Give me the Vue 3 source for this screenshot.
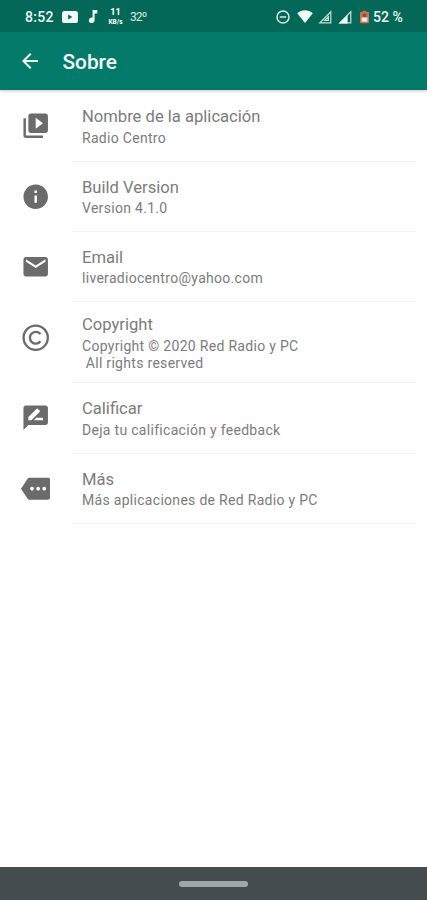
<template>
  <div class="screen">
    <header class="top">
      <div class="status">
        <div class="status-left">
          <span class="clock">8:52</span>
          <svg class="youtube" viewBox="0 0 16 12">
            <rect width="16" height="12" rx="2.6" />
            <path d="M6.2 3.4v5.2L10.4 6z" class="cutout" />
          </svg>
          <svg class="note" viewBox="6 3 12 18">
            <path d="M11.4 3v10.55A4 4 0 1 0 14.2 17V8H18V3z" />
          </svg>
          <span class="speed"><b>11</b><small>KB/s</small></span>
          <span class="temp">32º</span>
        </div>
        <div class="status-right">
          <svg class="dnd" viewBox="0 0 14 14">
            <circle cx="7" cy="7" r="6" />
            <path d="M3.8 7h6.4" />
          </svg>
          <svg class="wifi" viewBox="0 0 16 13">
            <path d="M8 13 0.2 3.3C4.5-.8 11.5-.8 15.8 3.3z" />
          </svg>
          <svg class="signal" viewBox="0 0 14 14">
            <path d="M1.8 12.8H12.8V1.8z" class="outline" />
            <path d="M6.6 10.4h3.8V6.6z" class="outline" />
          </svg>
          <svg class="signal second" viewBox="0 0 14 14">
            <path d="M1.8 12.8H12.8V1.8z" class="outline" />
            <path d="M1 13.4H9.6V5z" />
          </svg>
          <svg class="battery" viewBox="0 0 10 14">
            <path d="M3 0h4v1.5h2.2q.8 0 .8.8v10.9q0 .8-.8.8H.8q-.8 0-.8-.8V2.3q0-.8.8-.8H3z" />
            <path d="M1.8 7.6h6.4v4.6H1.8z" class="charge" />
            <path d="M3 3.4h4v3.4H3z" class="hollow" />
          </svg>
          <span class="percent">52 %</span>
        </div>
      </div>
      <div class="toolbar">
        <svg class="back" viewBox="0 0 24 24">
          <path d="M20 11H7.83l5.59-5.59L12 4l-8 8 8 8 1.41-1.41L7.83 13H20z" />
        </svg>
        <h1>Sobre</h1>
      </div>
    </header>

    <main class="list">
      <div v-for="item in items" :key="item.title" class="item" :class="{ tall: item.tall }">
        <svg class="icon" viewBox="0 0 24 24">
          <path v-if="item.icon" :d="item.icon" />
          <g v-else class="ring">
            <circle cx="12" cy="12" r="9.9" />
            <path d="M15.9 9.1A4.8 4.8 0 1 0 15.9 14.9" />
          </g>
        </svg>
        <div class="body">
          <div class="title">{{ item.title }}</div>
          <div class="sub">{{ item.sub }}</div>
        </div>
      </div>
    </main>

    <footer class="nav"><span class="pill"></span></footer>
  </div>
</template>

<script setup>
const items = [
  {
    title: 'Nombre de la aplicación',
    sub: 'Radio Centro',
    icon: 'M4 6H2v14c0 1.1.9 2 2 2h14v-2H4V6zm16-4H8c-1.1 0-2 .9-2 2v12c0 1.1.9 2 2 2h12c1.1 0 2-.9 2-2V4c0-1.1-.9-2-2-2zm-8 12.5v-9l6 4.5-6 4.5z',
  },
  {
    title: 'Build Version',
    sub: 'Version 4.1.0',
    icon: 'M12 2C6.48 2 2 6.48 2 12s4.48 10 10 10 10-4.48 10-10S17.52 2 12 2zm1 15h-2v-6h2v6zm0-8h-2V7h2v2z',
  },
  {
    title: 'Email',
    sub: 'liveradiocentro@yahoo.com',
    icon: 'M20 4H4c-1.1 0-1.99.9-1.99 2L2 18c0 1.1.9 2 2 2h16c1.1 0 2-.9 2-2V6c0-1.1-.9-2-2-2zm0 4l-8 5-8-5V6l8 5 8-5v2z',
  },
  {
    // no icon path: the copyright sign is drawn with strokes in the template
    title: 'Copyright',
    sub: 'Copyright © 2020 Red Radio y PC\n All rights reserved',
    tall: true,
  },
  {
    title: 'Calificar',
    sub: 'Deja tu calificación y feedback',
    icon: 'M20 2H4c-1.1 0-1.99.9-1.99 2L2 22l4-4h14c1.1 0 2-.9 2-2V4c0-1.1-.9-2-2-2zM6 14v-2.47l6.88-6.88c.2-.2.51-.2.71 0l1.77 1.77c.2.2.2.51 0 .71L8.47 14H6zm12 0h-7.5l2-2H18v2z',
  },
  {
    title: 'Más',
    sub: 'Más aplicaciones de Red Radio y PC',
    icon: 'M22 3H7c-.69 0-1.23.35-1.59.88L0 12l5.41 8.11c.36.53.97.89 1.66.89H22c1.1 0 2-.9 2-2V5c0-1.1-.9-2-2-2zM9 13.5c-.83 0-1.5-.67-1.5-1.5s.67-1.5 1.5-1.5 1.5.67 1.5 1.5-.67 1.5-1.5 1.5zm5 0c-.83 0-1.5-.67-1.5-1.5s.67-1.5 1.5-1.5 1.5.67 1.5 1.5-.67 1.5-1.5 1.5zm5 0c-.83 0-1.5-.67-1.5-1.5s.67-1.5 1.5-1.5 1.5.67 1.5 1.5-.67 1.5-1.5 1.5z',
  },
]
</script>

<style>
body {
  margin: 0;
  background: #fefefe;
}
</style>

<style scoped>
.screen {
  display: flex;
  flex-direction: column;
  height: 900px;
  font-family: Roboto, sans-serif;
  background: #fefefe;
}

svg {
  display: block;
  flex: none;
}

.top {
  color: #fff;
  background: #047a6a;
  box-shadow: 0 1px 3px rgba(0, 0, 0, 0.22);
}

.status {
  display: flex;
  justify-content: space-between;
  box-sizing: border-box;
  height: 32px;
  padding: 1px 23px 0 25px;
  background: #036858;
}

.status svg {
  fill: #f2faf8;
}

.status-left,
.status-right {
  display: flex;
  align-items: center;
}

.clock,
.percent {
  font-size: 14px;
  font-weight: 500;
  color: #eef8f5;
}

.clock {
  width: 29px;
  letter-spacing: 0.3px;
}

.youtube {
  width: 16px;
  height: 12px;
  margin-left: 8px;
}

.youtube .cutout {
  fill: #036858;
}

.note {
  width: 10px;
  height: 13px;
  margin-left: 10px;
}

.speed {
  display: flex;
  flex-direction: column;
  align-items: center;
  width: 17px;
  margin-left: 9px;
}

.speed b {
  font-size: 9px;
  font-weight: 700;
  line-height: 11px;
}

.speed small {
  font-size: 6.5px;
  font-weight: 700;
  line-height: 8px;
}

.temp {
  margin-left: 6px;
  font-size: 12px;
  letter-spacing: -0.9px;
  color: #d3e8e3;
}

.dnd {
  width: 14px;
  height: 14px;
}

.status .dnd {
  fill: none;
  stroke: #d9ece8;
  stroke-width: 1.5;
}

.wifi {
  width: 16px;
  height: 13px;
  margin-left: 7px;
}

.signal {
  width: 14px;
  height: 14px;
  margin-left: 5px;
}

.signal.second {
  margin-left: 6px;
}

.signal .outline {
  fill: none;
  stroke: #c6e0da;
  stroke-width: 1.2;
}

.battery {
  width: 9px;
  height: 14px;
  margin-left: 8px;
}

.status .battery {
  fill: #e0694a;
}

.battery .charge {
  fill: #fbeee9;
}

.battery .hollow {
  fill: #47695a;
}

.percent {
  width: 31px;
  margin-left: 4px;
  white-space: nowrap;
}

.toolbar {
  display: flex;
  align-items: center;
  height: 58px;
  padding-left: 18px;
}

.back {
  width: 24px;
  height: 24px;
  fill: #f2faf8;
}

h1 {
  margin: 2px 0 0 20.5px;
  font-size: 20.8px;
  font-weight: 500;
  line-height: 24px;
  color: #f2faf8;
}

.list {
  flex: 1;
  padding-top: 1.3px;
}

.item {
  display: flex;
  padding-right: 11px;
}

.icon {
  width: 29.4px;
  height: 29.4px;
  margin: 20px 21.6px 0 21px;
  fill: #6b6b6b;
}

.ring {
  fill: none;
  stroke: #6b6b6b;
  stroke-width: 1.9;
}

.body {
  flex: 1;
  padding: 15px 0 14.3px 10px;
  border-bottom: 1.6px solid #f3f3f3;
  color: #7c7c7c;
}

.tall .body {
  padding-top: 12px;
  padding-bottom: 11.2px;
}

.tall .icon {
  margin-top: 20.6px;
}

.title {
  font-size: 16.6px;
  line-height: 22px;
}

.sub {
  padding-top: 1.4px;
  margin-bottom: -0.4px;
  font-size: 14px;
  line-height: 17px;
  letter-spacing: 0.3px;
  white-space: pre;
}

.nav {
  display: flex;
  align-items: center;
  justify-content: center;
  height: 33px;
  background: #454c50;
}

.pill {
  width: 69px;
  height: 6px;
  border-radius: 3px;
  background: #a1a7a8;
}
</style>
